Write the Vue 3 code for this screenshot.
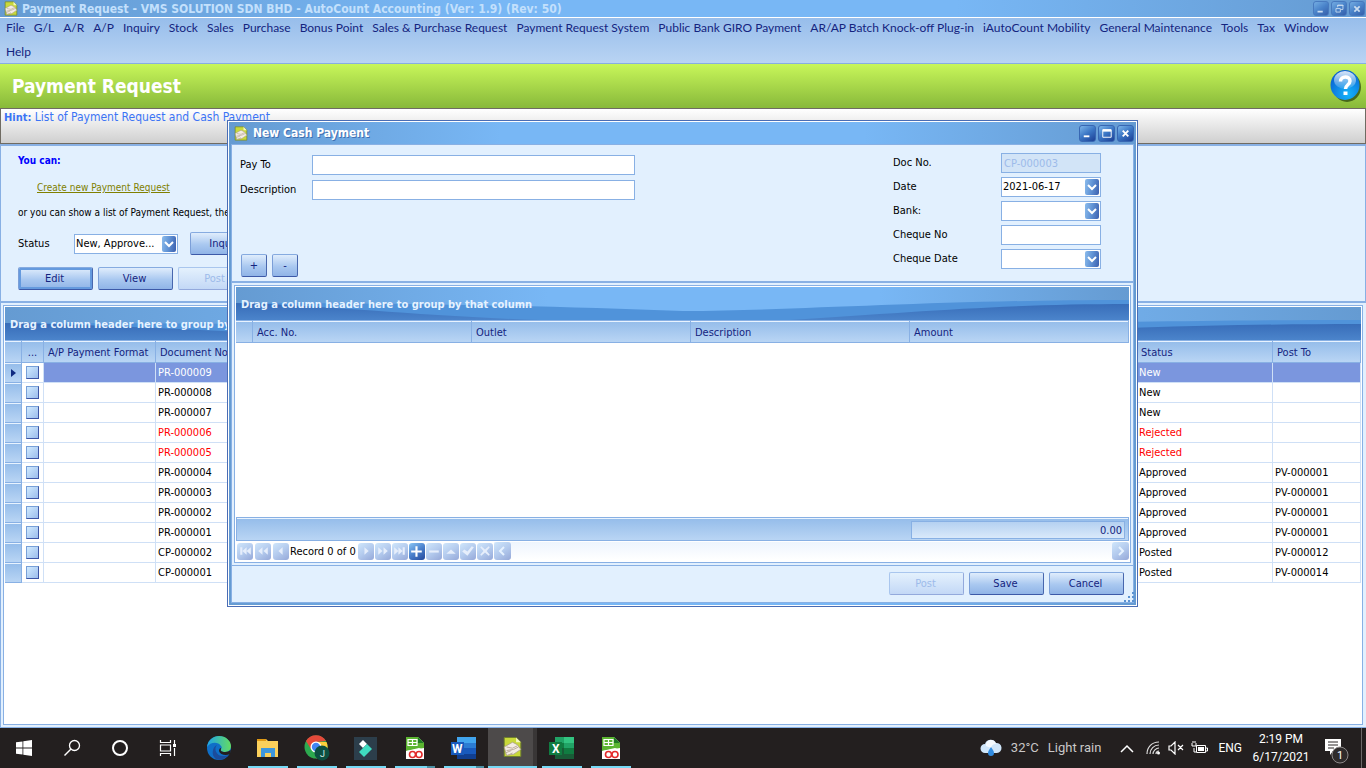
<script setup>
import { ref } from 'vue'

const menus = ['File', 'G/L', 'A/R', 'A/P', 'Inquiry', 'Stock', 'Sales', 'Purchase', 'Bonus Point', 'Sales & Purchase Request', 'Payment Request System', 'Public Bank GIRO Payment', 'AR/AP Batch Knock-off Plug-in', 'iAutoCount Mobility', 'General Maintenance', 'Tools', 'Tax', 'Window', 'Help']

const rows = [
  { doc: 'PR-000009', status: 'New', post: '' },
  { doc: 'PR-000008', status: 'New', post: '' },
  { doc: 'PR-000007', status: 'New', post: '' },
  { doc: 'PR-000006', status: 'Rejected', post: '' },
  { doc: 'PR-000005', status: 'Rejected', post: '' },
  { doc: 'PR-000004', status: 'Approved', post: 'PV-000001' },
  { doc: 'PR-000003', status: 'Approved', post: 'PV-000001' },
  { doc: 'PR-000002', status: 'Approved', post: 'PV-000001' },
  { doc: 'PR-000001', status: 'Approved', post: 'PV-000001' },
  { doc: 'CP-000002', status: 'Posted', post: 'PV-000012' },
  { doc: 'CP-000001', status: 'Posted', post: 'PV-000014' }
]

const navBefore = [
  { label: 'First', d: 'M3 4h2v7H3zM9 4v7L5 7.500zM13 4v7L9 7.500z' },
  { label: 'Previous page', d: 'M7 4v7L3 7.500zM12 4v7L8 7.500z' },
  { label: 'Previous', d: 'M9 4v7L5 7.500z' }
]
const navAfter = [
  { label: 'Next', d: 'M6 4v7l4-3.500z' },
  { label: 'Next page', d: 'M3 4v7l4-3.500zM8 4v7l4-3.500z' },
  { label: 'Last', d: 'M2 4v7l4-3.500zM6 4v7l4-3.500zM10 4h2v7h-2z' },
  { label: 'Append', d: 'M6 3h2v4h4v2H8v4H6V9H2V7h4z', on: true },
  { label: 'Delete', d: 'M3 7h9v2H3z' },
  { label: 'Edit record', d: 'M3 10h9L7.500 6z' },
  { label: 'End edit', d: 'M2 8l2-2 3 2 4-5 2 1-6 8z' },
  { label: 'Cancel edit', d: 'M3 4l1-1 3.500 3L11 3l1 1-3 3.500L12 11l-1 1-3.500-3L4 12l-1-1 3-3.500z' }
]

const payTo = ref('')
const description = ref('')
const date = ref('2021-06-17')
const chequeNo = ref('')
const chequeDate = ref('')
</script>

<template>
  <div class="screen">
    <svg class="defs" width="0" height="0" aria-hidden="true">
      <defs>
        <linearGradient id="glossy" x1="0" x2="1">
          <stop offset="0" stop-color="#659bd2" /><stop offset=".35" stop-color="#78b7f5" />
          <stop offset=".72" stop-color="#78b7f5" /><stop offset="1" stop-color="#659bd2" />
        </linearGradient>
        <linearGradient id="deep" x1="0" x2="0" y1="0" y2="1">
          <stop offset="0" stop-color="#376cb8" /><stop offset="1" stop-color="#4b84cb" />
        </linearGradient>
        <symbol id="doc" viewBox="0 0 16 18">
          <path d="M1 1h10l4 4v12H1z" fill="#c9d93a" stroke="#6f7f2c" stroke-width=".8" />
          <path d="M11 1v4h4z" fill="#f4f8c0" />
          <path d="M1 9l7-4 4 2 3 4-6 4-6 1z" fill="#f4ece4" stroke="#a3988a" stroke-width=".6" />
          <path d="M3 9l5 1 4-2M3 12l6-1 4-2M2 14l5-2M4 16l4-2" stroke="#b8a999" stroke-width=".8" fill="none" />
        </symbol>
        <symbol id="tree" viewBox="0 0 20 22">
          <path d="M1 0h12l6 6v16H1z" fill="#fff" />
          <path d="M1 0h12l6 6v5L1 14z" fill="#5cb531" />
          <path d="M13 0v6h6z" fill="#1f7a24" />
          <path d="M3 2.500h9v6H3zM3 5.500h9M7.500 2.500v6" fill="none" stroke="#fff" stroke-width="1.200" />
          <path d="M1 14l13-3 5 2v9H1z" fill="#fff" />
          <ellipse cx="7.500" cy="17.500" rx="3" ry="3" fill="none" stroke="#e32a2a" stroke-width="1.600" />
          <ellipse cx="14" cy="17.500" rx="3" ry="3" fill="none" stroke="#e32a2a" stroke-width="1.600" />
        </symbol>
        <symbol id="drop" viewBox="0 0 14 16">
          <path d="M3 6l4 4 4-4" fill="none" stroke="#fff" stroke-width="2" />
        </symbol>
      </defs>
    </svg>

    <header class="titlebar">
      <svg class="title-icon" width="14" height="15"><use href="#doc" /></svg>
      <h1 class="title">Payment Request - VMS SOLUTION SDN BHD - AutoCount Accounting (Ver: 1.9) (Rev: 50)</h1>
      <div class="win-buttons faded">
        <button type="button" class="win" aria-label="Minimize"><svg viewBox="0 0 16 16"><path d="M4 11h6" stroke="#fff" stroke-width="2" /></svg></button>
        <button type="button" class="win" aria-label="Restore"><svg viewBox="0 0 16 16"><path d="M6.500 6V3.500h6v5H10M6 4h7M4.500 7.500h5v4h-5z" fill="none" stroke="#fff" /></svg></button>
        <button type="button" class="win" aria-label="Close"><svg viewBox="0 0 16 16"><path d="M5 5l6 6M11 5l-6 6" stroke="#fff" stroke-width="2" /></svg></button>
      </div>
    </header>

    <nav class="menu">
      <button v-for="m in menus" :key="m" type="button">{{ m }}</button>
    </nav>

    <div class="banner">
      <h2>Payment Request</h2>
      <button type="button" class="help" aria-label="Help">
        <svg width="32" height="34" viewBox="0 0 32 34">
          <defs>
            <radialGradient id="ball" cx=".6" cy=".8" r=".8"><stop offset="0" stop-color="#14b4fb" /><stop offset="1" stop-color="#0a5fd0" /></radialGradient>
            <linearGradient id="shine" x1="0" x2="0" y1="0" y2="1"><stop offset="0" stop-color="#fff" stop-opacity=".85" /><stop offset="1" stop-color="#fff" stop-opacity=".1" /></linearGradient>
          </defs>
          <ellipse cx="17" cy="18" rx="14" ry="15" fill="#2c4a10" opacity=".75" />
          <ellipse cx="15" cy="16" rx="14.500" ry="15" fill="url(#ball)" />
          <ellipse cx="15" cy="11" rx="11" ry="9" fill="url(#shine)" />
          <path d="M10.500 12.500c0-6 9.500-6 9.500-.5 0 4-4.500 3.500-4.500 8" fill="none" stroke="#fff" stroke-width="3.500" />
          <path d="M13.500 22.500h4v3.500h-4z" fill="#fff" />
        </svg>
      </button>
    </div>

    <div class="hint"><b>Hint:</b> <span>List of Payment Request and Cash Payment</span></div>

    <section class="actions">
      <b class="you-can">You can:</b>
      <a class="create" href="#">Create new Payment Request</a>
      <p class="sentence">or you can show a list of Payment Request, then edit</p>
      <div class="status-row">
        <label for="status">Status</label>
        <span class="field status-field">
          <select id="status"><option>New, Approve...</option></select>
          <svg class="arrow" aria-hidden="true"><use href="#drop" /></svg>
        </span>
        <button type="button" class="btn">Inquiry</button>
      </div>
      <div class="btn-row">
        <button type="button" class="btn focus">Edit</button>
        <button type="button" class="btn">View</button>
        <button type="button" class="btn" disabled>Post</button>
      </div>
    </section>

    <main class="list-panel">
      <div class="grid">
        <div class="group">
          <svg class="wave" viewBox="0 0 100 33" preserveAspectRatio="none" aria-hidden="true">
            <path d="M0 0h100v33H0z" fill="url(#glossy)" />
            <path d="M0 16C20 16 35 19 50 24C65 23 78 13 100 13V33H0z" fill="#5093da" />
            <path d="M0 16C10 18 20 29 34 33H0zM62 33C76 25 86 17 100 17V33z" fill="url(#deep)" />
          </svg>
          <span>Drag a column header here to group by that column</span>
        </div>
        <table class="list">
          <colgroup><col class="c-ind"><col class="c-chk"><col class="c-fmt"><col><col class="c-stat"><col class="c-post"></colgroup>
          <thead>
            <tr><th></th><th class="dots">...</th><th>A/P Payment Format</th><th>Document No.</th><th>Status</th><th>Post To</th></tr>
          </thead>
          <tbody>
            <tr v-for="(r, i) in rows" :key="r.doc" :class="{ selected: i === 0, rejected: r.status === 'Rejected' }">
              <td class="ind"><svg v-if="i === 0" width="5" height="8" viewBox="0 0 5 8"><path d="M0 0l5 4-5 4z" fill="#102a80" /></svg></td>
              <td class="chk"><input type="checkbox" :aria-label="'Select ' + r.doc"></td>
              <td></td><td>{{ r.doc }}</td><td>{{ r.status }}</td><td>{{ r.post }}</td>
            </tr>
          </tbody>
        </table>
      </div>
    </main>

    <section class="dialog" role="dialog" aria-labelledby="dialog-title">
      <div class="frame">
        <div class="dialog-title">
          <svg class="title-icon" width="14" height="15"><use href="#doc" /></svg>
          <h3 id="dialog-title">New Cash Payment</h3>
          <div class="win-buttons">
            <button type="button" class="win" aria-label="Minimize window"><svg viewBox="0 0 16 16"><path d="M4 11h6" stroke="#fff" stroke-width="2" /></svg></button>
            <button type="button" class="win" aria-label="Maximize window"><svg viewBox="0 0 16 16"><path d="M4 4h9v8H4z" fill="none" stroke="#fff" /><path d="M4 3.500h9v2.500H4z" fill="#fff" /></svg></button>
            <button type="button" class="win" aria-label="Close window"><svg viewBox="0 0 16 16"><path d="M5 5l6 6M11 5l-6 6" stroke="#fff" stroke-width="2" /></svg></button>
          </div>
        </div>
        <div class="client">
          <div class="form">
            <div class="form-left">
              <div class="pair"><label for="payto">Pay To</label><input id="payto" v-model="payTo" class="field" type="text"></div>
              <div class="pair"><label for="desc">Description</label><input id="desc" v-model="description" class="field" type="text"></div>
              <div class="plusminus">
                <button type="button" class="btn small">+</button>
                <button type="button" class="btn small">-</button>
              </div>
            </div>
            <div class="form-right">
              <div class="pair"><label for="docno">Doc No.</label><input id="docno" class="field" type="text" value="CP-000003" disabled></div>
              <div class="pair"><label for="date">Date</label><span class="field"><input id="date" v-model="date" type="text"><button type="button" class="arrow" aria-label="Pick date"><svg><use href="#drop" /></svg></button></span></div>
              <div class="pair"><label for="bank">Bank:</label><span class="field"><select id="bank"><option></option></select><svg class="arrow" aria-hidden="true"><use href="#drop" /></svg></span></div>
              <div class="pair"><label for="chqno">Cheque No</label><input id="chqno" v-model="chequeNo" class="field" type="text"></div>
              <div class="pair"><label for="chqdate">Cheque Date</label><span class="field"><input id="chqdate" v-model="chequeDate" type="text"><button type="button" class="arrow" aria-label="Pick cheque date"><svg><use href="#drop" /></svg></button></span></div>
            </div>
          </div>
          <div class="grid-wrap">
            <div class="grid">
              <div class="group">
                <svg class="wave" viewBox="0 0 100 33" preserveAspectRatio="none" aria-hidden="true">
                  <path d="M0 0h100v33H0z" fill="url(#glossy)" />
                  <path d="M0 16C20 16 35 19 50 24C65 23 78 13 100 13V33H0z" fill="#5093da" />
                  <path d="M0 16C10 18 20 29 34 33H0zM62 33C76 25 86 17 100 17V33z" fill="url(#deep)" />
                </svg>
                <span>Drag a column header here to group by that column</span>
              </div>
              <table class="list">
                <colgroup><col class="c-ind"><col><col><col><col></colgroup>
                <thead><tr><th></th><th>Acc. No.</th><th>Outlet</th><th>Description</th><th>Amount</th></tr></thead>
              </table>
              <div class="blank"></div>
              <div class="total"><output>0.00</output></div>
              <div class="navigator">
                <div class="nav-set">
                  <button v-for="n in navBefore" :key="n.label" type="button" class="nav" :aria-label="n.label"><svg viewBox="0 0 15 16"><path :d="n.d" /></svg></button>
                </div>
                <span class="record">Record 0 of 0</span>
                <button v-for="n in navAfter" :key="n.label" type="button" class="nav" :class="{ on: n.on }" :aria-label="n.label"><svg viewBox="0 0 15 16"><path :d="n.d" /></svg></button>
                <div class="scroll">
                  <button type="button" class="nav wide" aria-label="Scroll left"><svg viewBox="0 0 17 18"><path d="M10 5L6 9l4 4" class="chev" /></svg></button>
                  <button type="button" class="nav wide" aria-label="Scroll right"><svg viewBox="0 0 17 18"><path d="M7 5l4 4-4 4" class="chev" /></svg></button>
                </div>
              </div>
            </div>
          </div>
          <div class="dialog-foot">
            <button type="button" class="btn" disabled>Post</button>
            <button type="button" class="btn">Save</button>
            <button type="button" class="btn">Cancel</button>
            <svg class="grip" width="10" height="10" viewBox="0 0 10 10"><path d="M8 0h2v2H8zM4 4h2v2H4zM8 4h2v2H8zM0 8h2v2H0zM4 8h2v2H4zM8 8h2v2H8z" fill="#5b92d2" /></svg>
          </div>
        </div>
      </div>
    </section>

    <footer class="taskbar">
      <button type="button" class="sys" aria-label="Start"><svg width="16" height="16" viewBox="0 0 16 16"><path d="M0 2.300L6.500 1.400v6.200H0zM7.300 1.300L16 0v7.600H7.300zM0 8.400h6.500v6.200L0 13.700zM7.300 8.400H16V16l-8.700-1.200z" fill="#fff" /></svg></button>
      <button type="button" class="sys" aria-label="Search"><svg width="18" height="18" viewBox="0 0 18 18"><circle cx="11.500" cy="6.500" r="5" fill="none" stroke="#fff" stroke-width="1.300" /><path d="M8 10l-6.500 6.500" stroke="#fff" stroke-width="1.500" /></svg></button>
      <button type="button" class="sys" aria-label="Cortana"><svg width="18" height="18" viewBox="0 0 18 18"><circle cx="9" cy="9" r="7" fill="none" stroke="#fff" stroke-width="2" /></svg></button>
      <button type="button" class="sys" aria-label="Task view"><svg width="18" height="18" viewBox="0 0 18 18"><path d="M1.500 1v2.500h10V1M1.500 6h10v6h-10zM1.500 17v-2.500h10V17M15.500 1v4M15.500 9v8" fill="none" stroke="#fff" stroke-width="1.200" /><path d="M14 5h3v3h-3z" fill="#fff" /></svg></button>
      <div class="apps">
        <button type="button" class="app" aria-label="Edge">
          <svg width="26" height="26" viewBox="0 0 26 26">
            <defs><linearGradient id="edge-a" x1="0" x2="1"><stop offset="0" stop-color="#1fa4e8" /><stop offset="1" stop-color="#63dc62" /></linearGradient></defs>
            <circle cx="13" cy="13" r="12" fill="#0f6fc8" />
            <path d="M1 12C2 5 7 1 13 1c7 0 12 5 12 10 0 4-3 6-6 6-3 0-5-1-4-3 1-1 1-2 0-3C12 6 4 7 1 12z" fill="url(#edge-a)" />
            <path d="M11 10c-4 4 0 12 7 11 2 0 4-1 5-2-3 5-9 7-13 5C5 21 6 12 11 10z" fill="#1b4c9c" />
            <path d="M15 14c-1 2 1 3 4 3 2 0 4-1 6-2l-1 4c-4 2-10 1-11-3 0-2 1-3 2-3z" fill="#231f1f" />
          </svg>
        </button>
        <button type="button" class="app open" aria-label="File Explorer"><svg width="22" height="20" viewBox="0 0 22 20"><path d="M0 1h9l2 2h10v16H0z" fill="#fbd05b" /><path d="M0 1h9v2H0z" fill="#e19a14" /><path d="M4 19v-9h14v9h-4v-4H8v4z" fill="#3e97dd" /></svg></button>
        <button type="button" class="app open" aria-label="Chrome">
          <svg width="26" height="26" viewBox="0 0 26 26">
            <circle cx="12" cy="12" r="11.500" fill="#2da94f" /><path d="M2 6a11.500 11.500 0 0 1 20 0l-10 1-5 7z" fill="#e5493a" /><path d="M12 7h10.500a11.500 11.500 0 0 1-10 16.500L17 14z" fill="#fdd03b" />
            <circle cx="12" cy="12" r="5.500" fill="#fff" /><circle cx="12" cy="12" r="4.200" fill="#4285f4" />
            <circle cx="18" cy="18" r="7.500" fill="#0c4f41" /><text x="16" y="22" fill="#d5efe6" class="initial">J</text>
          </svg>
        </button>
        <button type="button" class="app open" aria-label="Filmora"><svg width="23" height="23" viewBox="0 0 23 23"><path d="M0 0h23v23H0z" fill="#2c3e4b" /><path d="M9 3l4 4-4 4-4-4z" fill="#fff" /><path d="M13 7l5 5-8 8-5-5z" fill="#3fdcc0" /></svg></button>
        <button type="button" class="app open stack" aria-label="AutoCount A"><svg width="20" height="22"><use href="#tree" /></svg></button>
        <button type="button" class="app open stack" aria-label="Word"><svg width="25" height="22" viewBox="0 0 25 22"><path d="M6 0h19v6H6z" fill="#41a5ee" /><path d="M6 6h19v5H6z" fill="#2b7cd3" /><path d="M6 11h19v6H6z" fill="#185abd" /><path d="M6 17h19v5H6z" fill="#103f91" /><path d="M0 5h13v13H0z" fill="#185abd" /><text x="1" y="16" class="letter">W</text></svg></button>
        <button type="button" class="app active" aria-label="AutoCount Accounting"><svg width="19" height="22"><use href="#doc" /></svg></button>
        <button type="button" class="app open" aria-label="Excel"><svg width="25" height="22" viewBox="0 0 25 22"><path d="M6 0h19v22H6z" fill="#21a366" /><path d="M15 0h10v6H15z" fill="#33c481" /><path d="M6 6h9v5H6z" fill="#107c41" /><path d="M6 11h19v11H6z" fill="#185c37" /><path d="M15 11h10v6H15z" fill="#107c41" /><path d="M0 5h13v13H0z" fill="#107c41" /><text x="3" y="16" class="letter">X</text></svg></button>
        <button type="button" class="app open" aria-label="AutoCount B"><svg width="20" height="22"><use href="#tree" /></svg></button>
      </div>
      <div class="tray">
        <button type="button" class="weather"><svg width="22" height="18" viewBox="0 0 22 18"><path d="M5 14a4.500 4.500 0 0 1 0-9 6 6 0 0 1 11-1 5 5 0 0 1 1 10z" fill="#cfe6fa" /><path d="M6 7a5 5 0 0 1 10-2 5 5 0 0 0-5 4z" fill="#f4faff" /><path d="M11 8c2 3 3 4 3 6a3 3 0 0 1-6 0c0-2 1-3 3-6z" fill="#2f8be0" /></svg><span>32°C</span><span>Light rain</span></button>
        <button type="button" aria-label="Hidden icons" class="chevron"><svg width="14" height="9" viewBox="0 0 14 9"><path d="M1 8l6-6 6 6" fill="none" stroke="#fff" stroke-width="1.500" /></svg></button>
        <svg width="15" height="14" viewBox="0 0 15 14"><path d="M1 13C1 6 6 1 13 1M4 13c0-5 4-9 9-9M7 13c0-3 3-6 6-6M10 13c0-2 1-3 3-3" fill="none" stroke="#ddd" stroke-width="1.200" /><circle cx="12.500" cy="12" r="1.500" fill="#fff" /></svg>
        <svg width="16" height="14" viewBox="0 0 16 14"><path d="M1 5h2l4-4v12L3 9H1zM10 4l5 5M15 4l-5 5" fill="none" stroke="#fff" stroke-width="1.200" /></svg>
        <svg class="battery" width="17" height="14" viewBox="0 0 17 14"><path d="M5.500 4.500h9v7h-9zM15 7h1.500v3H15M3 7v4h2M1 2v3h4V2M2 0v2M4 0v2" fill="none" stroke="#fff" /><path d="M7 6h6v4H7z" fill="#fff" /></svg>
        <span class="lang">ENG</span>
        <div class="clock"><span>2:19 PM</span><span>6/17/2021</span></div>
        <button type="button" class="notice" aria-label="Notifications"><svg width="26" height="26" viewBox="0 0 26 26"><path d="M1 1h16v12H9l-3 4v-4H1z" fill="#fff" /><path d="M4 4h10M4 7h10M4 10h6" stroke="#2a2626" /><circle cx="16" cy="17" r="8" fill="#2e2b2b" stroke="#8b8888" /><text x="13" y="21" class="count">1</text></svg></button>
        <i class="peek"></i>
      </div>
    </footer>
  </div>
</template>

<style>
body { margin: 0; background: #e2f0fe; }
</style>

<style scoped>
.screen {
  --ui: "DejaVu Sans Condensed", "Noto Sans", sans-serif;
  --segoe: "Roboto", "Noto Sans", sans-serif;
  --line: #88b0e4;
  --pale: #e2f0fe;
  --navy: #14247f;
  position: relative;
  display: flex;
  flex-direction: column;
  min-height: 100vh;
  overflow: hidden;
  background: var(--pale);
  font: 11px/14px var(--ui);
  color: #000;
}
.screen *, .screen *::before, .screen *::after { box-sizing: border-box; }
.defs { position: absolute; }
button, input, select { font: inherit; color: inherit; margin: 0; padding: 0; border: 0; background: none; }
h1, h2, h3, p { margin: 0; }
svg { display: block; flex: none; }

.titlebar {
  display: flex; align-items: center; height: 18px; padding: 0 1px 0 4px; overflow: hidden;
  border-bottom: 1px solid #fff;
  background: linear-gradient(90deg, #659bd2, #78b7f5 35%, #78b7f5 70%, #659bd2);
}
.title { flex: 1; margin-left: 4px; font: bold 12px/16px var(--ui); color: #c3e0fc; white-space: nowrap; }
.win-buttons { display: flex; gap: 2px; }
.win { width: 17px; height: 17px; border-radius: 3px; background: linear-gradient(145deg, #7bb5ea, #3a75c4 50%, #1c3f95); border: 1px solid #3867b3; }
.win svg { width: 15px; height: 15px; }
.faded .win { width: 16px; height: 15px; opacity: .65; }
.faded svg { width: 14px; height: 14px; }

.menu {
  display: flex; flex-wrap: wrap; gap: 4px 9px; padding: 0 12px 1px 6px;
  background: linear-gradient(#97bdeb, #b9d4f3); border-bottom: 1px solid #88aee0;
}
.menu button { font: 12px/20px "Lato", var(--segoe); color: var(--navy); white-space: nowrap; }

.banner {
  display: flex; align-items: center; justify-content: space-between; height: 44px; padding: 0 4px 0 12px;
  background: linear-gradient(#c8f65a, #88b93a);
}
.banner h2 { font: bold 19px/24px var(--ui); color: #fff; }
.hint {
  height: 36px; padding: 1px 3px; border: 1px solid #6f6b62;
  background: linear-gradient(#fff, #cfcfcf);
  font-size: 12px; color: #3b74f5; white-space: nowrap;
}
.hint b { font-size: 11px; }

.actions {
  display: flex; flex-direction: column; align-items: flex-start;
  height: 159px; padding: 8px 17px 0; border: solid var(--line); border-width: 2px 1px;
}
.you-can { font-size: 10px; color: #00f; }
.create { margin: 13px 0 0 19px; font-size: 10px; color: #808000; }
.sentence { margin-top: 11px; font-size: 10px; white-space: nowrap; }
.status-row { display: flex; align-items: center; margin-top: 12px; }
.status-row label { width: 56px; }
.status-field { width: 104px; margin-right: 12px; }
.btn-row { display: flex; gap: 5px; margin-top: 12px; }

.btn {
  width: 75px; height: 23px; padding-right: 2px; border-radius: 2px; border: 1px solid; border-color: #86abe0 #4867ae #3c59a8 #7c9fd8;
  background: linear-gradient(#e0edfc, #a9c8f0 55%, #90b4e7); color: var(--navy); line-height: 20px; text-align: center;
}
.btn.focus { box-shadow: inset 0 0 0 2px #659ade; }
.btn:disabled { color: #9dbbea; border-color: #a9c6ee #93a9dc #93a9dc #a9c6ee; background: linear-gradient(#e4f1fd, #c3d8f6); }
.btn.small { width: 26px; padding: 0; }

.field {
  display: flex; height: 20px; border: 1px solid var(--line); background: #fff;
}
input.field { padding: 0 2px; }
.field:disabled { background: #d2e4f7; color: #9dbbea; }
.field input, .field select { flex: 1; min-width: 0; padding: 0 1px; appearance: none; outline: 0; }
.field .arrow {
  flex: none; width: 14px; height: 16px; margin: 1px; border-radius: 2px;
  background: linear-gradient(100deg, #8bbcec, #5f91d4 50%, #3b5fae);
}
.arrow svg { width: 14px; height: 16px; }

.list-panel { flex: 1; display: flex; padding: 2px 3px; border-left: 1px solid var(--line); }
.grid { flex: 1; display: flex; flex-direction: column; border: 1px solid var(--line); padding: 1px; background: #fff; }
.list-panel .grid { margin-left: -1px; }
.group { position: relative; height: 33px; overflow: hidden; flex: none; }
.wave { position: absolute; inset: 0; width: 100%; height: 100%; }
.group span { position: relative; display: block; padding-left: 5px; font-weight: bold; line-height: 36px; color: #e6f2ff; white-space: nowrap; }
.list { width: 100%; table-layout: fixed; border-collapse: separate; border-spacing: 0; }
.c-ind { width: 17px; } .c-chk { width: 22px; } .c-fmt { width: 112px; } .c-stat { width: 136px; } .c-post { width: 88px; }
th {
  height: 23px; padding: 2px 0 0 4px; border: solid var(--line); border-width: 1px 1px 1px 0; background: linear-gradient(#94bcea, #b9d5f4);
  box-shadow: inset 0 1px #e8f3ff; color: var(--navy); font-weight: normal; text-align: left; white-space: nowrap;
}
th.dots { padding-left: 0; text-align: center; }
td { height: 20px; padding: 0 2px; border: solid #cfe0f6; border-width: 0 1px 1px 0; white-space: nowrap; line-height: 14px; }
td.ind { padding: 0 0 0 6px; border-color: var(--line); background: linear-gradient(#94bcea, #b9d5f4); box-shadow: inset 0 1px #e8f3ff; }
td.chk { padding: 0 0 0 4px; }
.chk input {
  display: block; appearance: none; width: 13px; height: 13px; border: 1px solid; border-color: #78a0d8 #3d55a5 #3d55a5 #78a0d8;
  background: linear-gradient(135deg, #cfeaff, #9dbdec);
}
.selected td:nth-child(n+3) { background: #7b96de; color: #fff; }
.rejected td { color: #f00; }

.dialog { position: absolute; left: 227px; top: 120px; width: 911px; border: 1px solid #4a6db5; }
.frame {
  border: 1px solid #fff; padding: 0 2px 2px; background: linear-gradient(90deg, #659bd2, #78b7f5 30%, #78b7f5 70%, #659bd2);
}
.dialog-title { display: flex; align-items: center; height: 22px; padding: 0 0 0 3px; }
.dialog-title h3 { flex: 1; margin-left: 5px; font: bold 12px/16px var(--ui); color: #fff; text-shadow: 1px 1px #3f6fb0; }
.client { border: 1px solid var(--line); background: var(--pale); }
.form { display: flex; justify-content: space-between; padding: 8px 32px 4px 8px; border-bottom: 2px solid var(--line); }
.form-left { display: flex; flex-direction: column; gap: 5px; width: 395px; padding-top: 2px; }
.pair { display: flex; align-items: center; }
.pair .field { flex: 1; min-width: 0; }
.form-left label { width: 72px; }
.plusminus { display: flex; gap: 5px; margin: 49px 0 0 1px; }
.form-right { display: flex; flex-direction: column; gap: 4px; width: 208px; height: 124px; }
.form-right label { width: 108px; }
.grid-wrap { padding: 2px; border-bottom: 1px solid var(--line); }
.grid-wrap .grid { height: 278px; }
.blank { flex: 1; }
.total { display: flex; justify-content: flex-end; height: 24px; padding: 3px 3px 2px; border: 1px solid var(--line); background: linear-gradient(#94bcea, #b9d5f4); box-shadow: inset 0 1px #e8f3ff; }
.total output { width: 214px; height: 18px; padding-right: 2px; border: 1px solid var(--line); background: linear-gradient(#b5d1f1, #d9e9fa); color: var(--navy); line-height: 17px; text-align: right; }
.navigator { display: flex; align-items: center; gap: 1px; height: 20px; padding-left: 1px; }
.nav-set { display: flex; gap: 2px; }
.nav { width: 16px; height: 17px; border-radius: 3px; background: linear-gradient(145deg, #cfe6fb, #b4cbee 50%, #95a8d8); }
.nav svg { width: 100%; height: 100%; }
.nav path { fill: #e6eefb; }
.nav.on { background: linear-gradient(145deg, #8bc6f5, #4a80cc 50%, #24489c); }
.nav.on path { fill: #fff; }
.nav.wide { width: 17px; height: 18px; }
.nav path.chev { fill: none; stroke: #e6f2ff; stroke-width: 2; }
.record { padding: 2px 1px 0 0; white-space: nowrap; }
.scroll { flex: 1; display: flex; justify-content: space-between; background: linear-gradient(#eef5fe, #fff); }
.dialog-foot { position: relative; display: flex; justify-content: flex-end; gap: 5px; padding: 6px 9px 7px; }
.grip { position: absolute; right: -1px; bottom: 0; }

.taskbar { display: flex; height: 41px; border-top: 1px solid var(--line); background: #231f1f; color: #fff; font: 12px/18px var(--segoe); }
.sys { width: 48px; display: flex; align-items: center; justify-content: center; }
.apps { display: flex; margin-left: 2px; }
.app { position: relative; width: 49px; display: flex; align-items: center; justify-content: center; }
.app.open::after { content: ""; position: absolute; left: 5px; right: 4px; bottom: 0; height: 2px; background: #76d9f5; }
.app.stack::after { background: linear-gradient(90deg, #76d9f5 32px, #4c90a4 32px); }
.app.active { background: linear-gradient(90deg, #4d4a4a 45px, #393636 45px); border-bottom: 2px solid #76d9f5; }
.initial { font: 9px var(--segoe); }
.letter { font: bold 12px var(--segoe); fill: #fff; }
.count { font: 11px var(--segoe); fill: #fff; }
.tray { flex: 1; display: flex; align-items: center; justify-content: flex-end; }
.tray > svg { margin-left: 7px; }
.weather { display: flex; align-items: center; gap: 9px; font-size: 13px; color: #c9c7c7; white-space: nowrap; }
.chevron { margin: 0 5px 0 19px; }
.lang { margin-left: 10px; }
.clock { display: flex; flex-direction: column; width: 54px; margin-left: 12px; text-align: center; white-space: nowrap; align-items: center; }
.notice { margin: 6px 11px 0 16px; }
.peek { width: 5px; align-self: stretch; border-left: 1px solid #6b6868; }
</style>
